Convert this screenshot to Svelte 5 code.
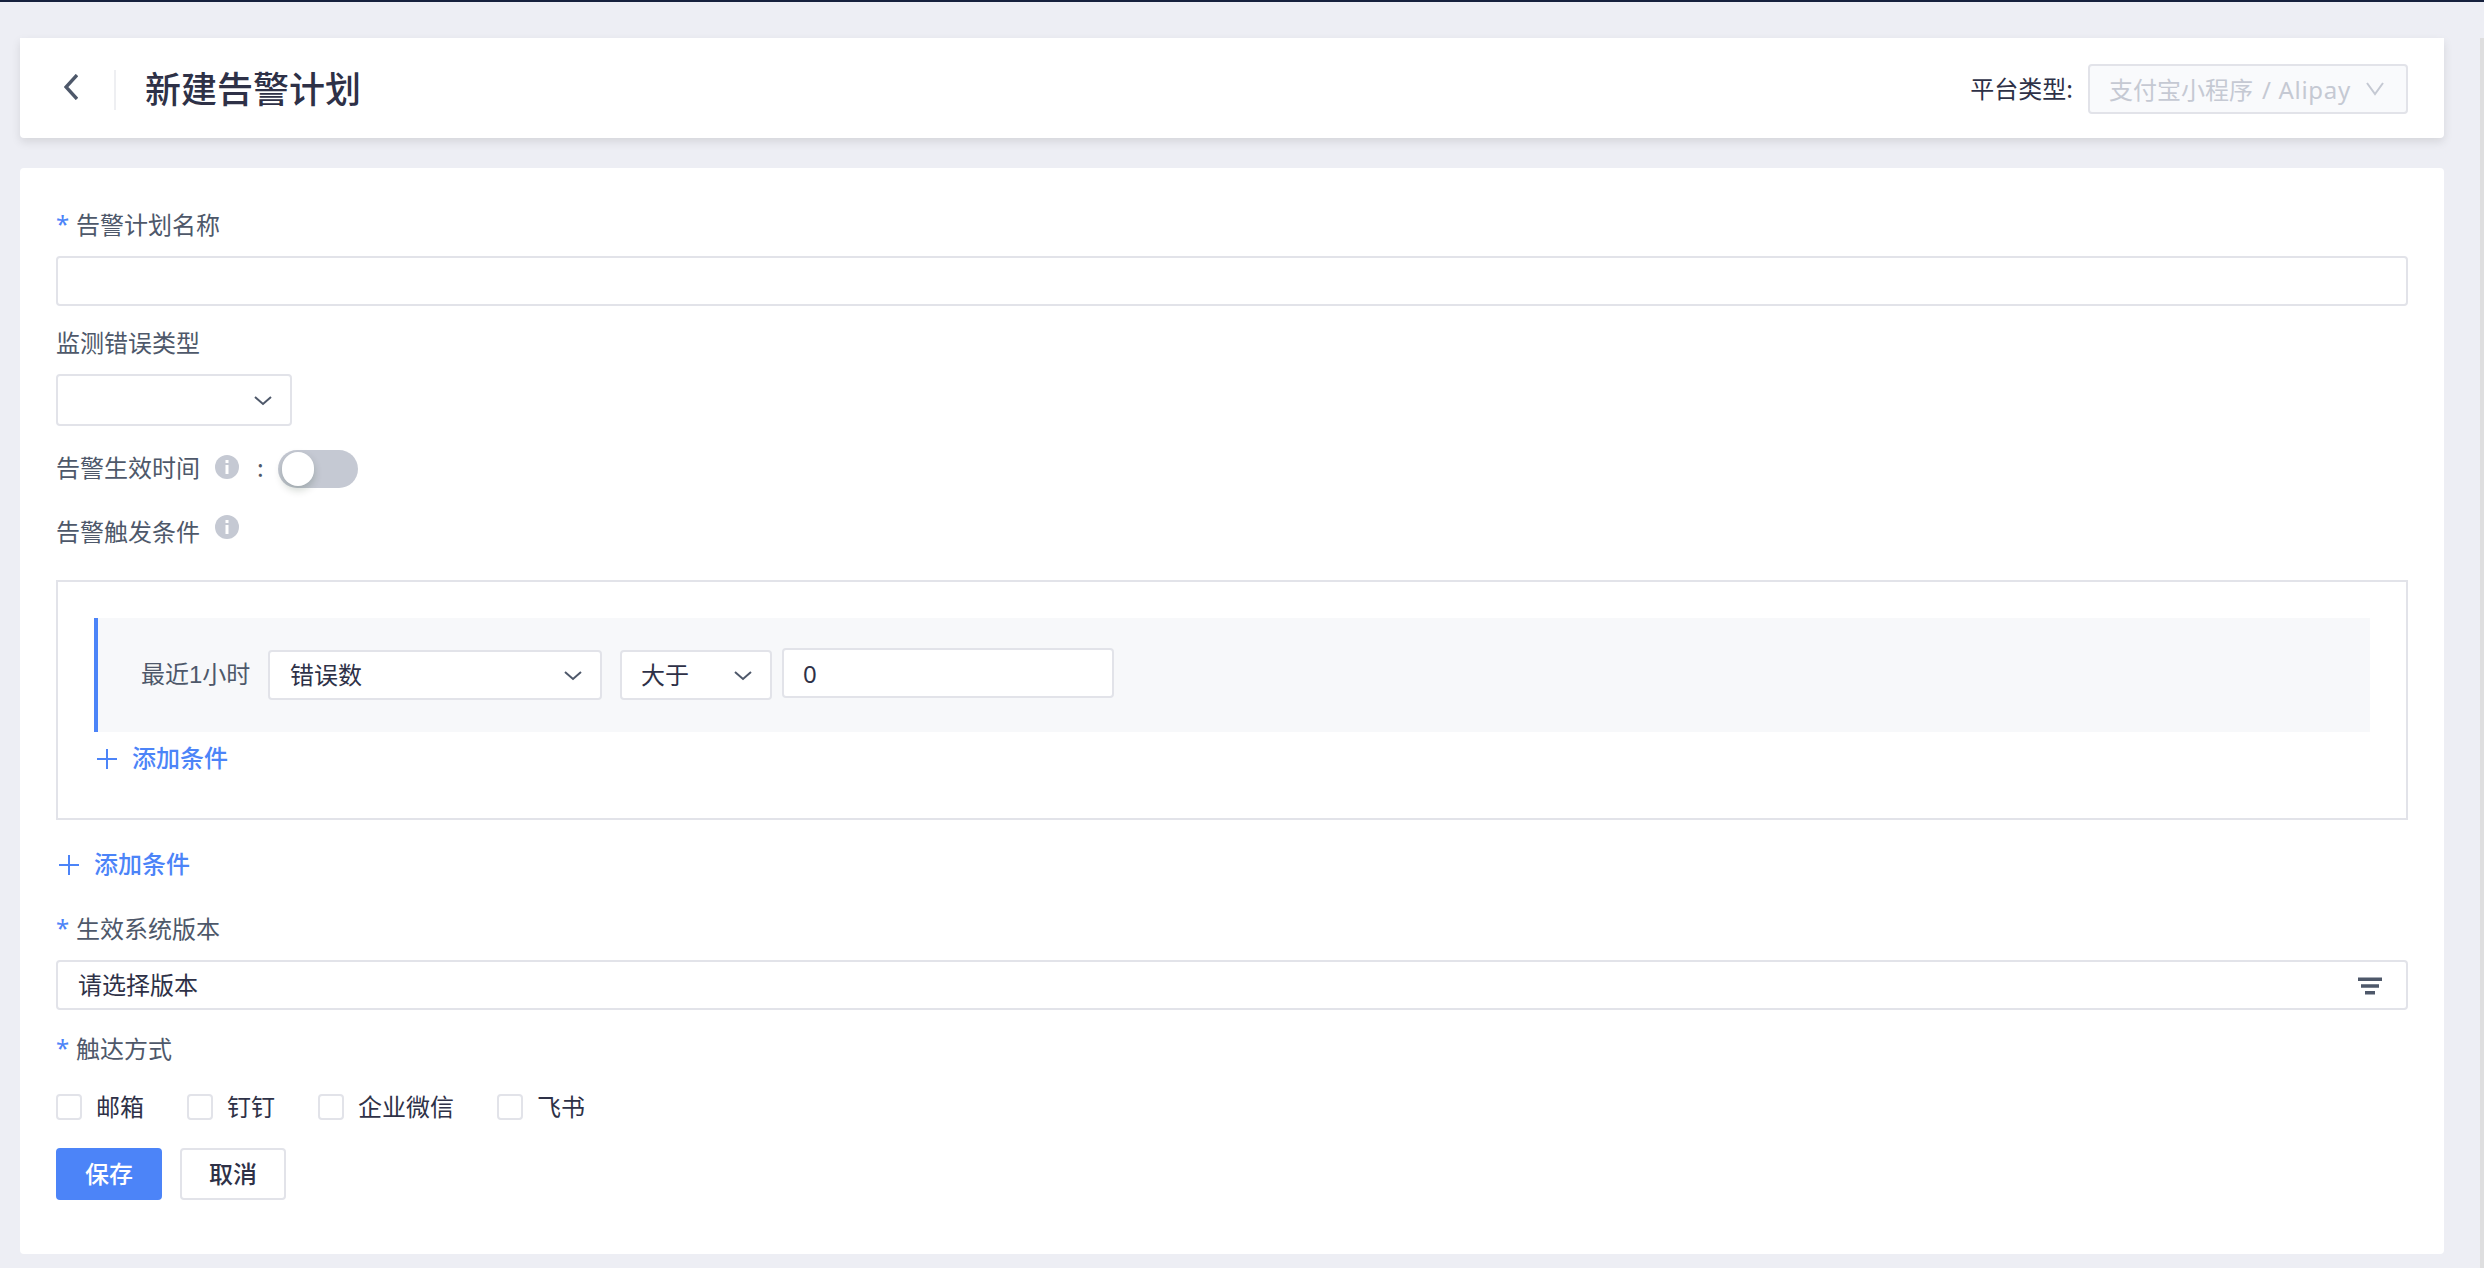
<script>
  let name = "";
  let enabled = false;
  let threshold = "0";

  const channels = [
    { key: "email", label: "邮箱", checked: false },
    { key: "dingtalk", label: "钉钉", checked: false },
    { key: "wecom", label: "企业微信", checked: false },
    { key: "feishu", label: "飞书", checked: false }
  ];
</script>

<style>
  :global(body) {
    background-color: #edeef4;
  }

  .page {
    box-sizing: border-box;
    display: flex;
    justify-content: space-between;
    height: 1268px;
    border-top: 2px solid #16213d;
    padding-top: 36px;
    padding-left: 20px;
    color: #2e3147;
    font-family: "Noto Sans CJK SC", "Noto Sans", sans-serif;
    font-size: 24px;
    line-height: 36px;
    overflow: hidden;
  }

  .page *,
  .page *::before {
    box-sizing: border-box;
  }

  .content {
    width: 2424px;
  }

  .scrollbar {
    width: 4px;
    background-color: #dededf;
  }

  .header {
    display: flex;
    align-items: center;
    height: 100px;
    padding: 0 36px 0 44px;
    background-color: white;
    border-radius: 0 0 4px 4px;
    box-shadow: 0 4px 10px rgba(0, 0, 0, 0.1);
  }

  .back {
    display: block;
    width: 14px;
    height: 26px;
    margin-bottom: 2px;
  }

  .header__divider {
    width: 2px;
    height: 40px;
    margin: 4px 29px 0 36px;
    background-color: #eeeff2;
  }

  .header__title {
    flex: 1;
    margin: 0 0 2px;
    font-size: 36px;
    font-weight: 500;
    line-height: 52px;
  }

  .header__label {
    margin-right: 15px;
  }

  .box {
    display: flex;
    align-items: center;
    justify-content: space-between;
    height: 50px;
    padding: 0 20px;
    background-color: white;
    border: 2px solid #e2e3e9;
    border-radius: 4px;
  }

  .box span {
    margin-bottom: 2px;
  }

  .box svg {
    display: block;
    margin-top: 2px;
  }

  .box--disabled {
    width: 320px;
    margin-top: 2px;
    padding: 0 22px 0 19px;
    background-color: #f9fafc;
    color: #c5c9d3;
  }

  .box--disabled span {
    margin-bottom: 0;
  }

  .box--disabled svg {
    margin-top: 0;
  }

  .box--disabled .latin {
    margin-left: 2px;
    font-family: "Noto Sans", sans-serif;
    letter-spacing: 0.7px;
    white-space: pre;
  }

  .box--type {
    width: 236px;
    height: 52px;
    padding-right: 18px;
    justify-content: flex-end;
  }

  .box--metric {
    width: 334px;
    padding-right: 18px;
    margin-right: 18px;
  }

  .box--operator {
    width: 152px;
    padding: 0 18px 0 19px;
    margin-right: 10px;
  }

  .box--version {
    padding: 0 24px 0 20px;
  }

  input.box {
    display: block;
    width: 100%;
    color: inherit;
    font: inherit;
    outline: none;
  }

  input.box--value {
    width: 332px;
    margin-bottom: 4px;
    font-family: "Noto Sans", sans-serif;
    padding: 0 19px;
  }

  .form {
    height: 1086px;
    margin-top: 30px;
    padding: 38px 36px 0;
    background-color: white;
    border-radius: 4px;
  }

  .label {
    display: flex;
    height: 50px;
    color: #4e586a;
  }

  .label--required::before {
    content: "*";
    width: 20px;
    color: #4c84f8;
    font-family: "Noto Sans", sans-serif;
  }

  .label--type {
    margin-top: 18px;
  }

  .label--time {
    height: 38px;
    margin-top: 24px;
    line-height: 33px;
  }

  .label--trigger {
    height: 74px;
    margin-top: 18px;
    padding-top: 8px;
    line-height: 33px;
  }

  .label--version {
    height: 50px;
  }

  .label--channel {
    height: 64px;
    margin-top: 20px;
  }

  .info {
    display: block;
    width: 24px;
    height: 24px;
    margin-left: 15px;
  }

  .label--time .info {
    margin-top: 5px;
  }

  .label--trigger .info {
    margin-top: 1px;
  }

  .colon {
    width: 39px;
    padding-left: 18px;
  }

  .switch {
    width: 80px;
    height: 38px;
    padding: 2px 4px;
    border: 0;
    border-radius: 19px;
    background-color: #c5c9d3;
  }

  .switch__knob {
    display: block;
    width: 32px;
    height: 34px;
    border-radius: 17px;
    background-color: white;
    box-shadow: 0 4px 8px rgba(0, 35, 11, 0.2);
  }

  .group {
    height: 240px;
    padding: 36px;
    border: 2px solid #e2e3e9;
  }

  .condition {
    display: flex;
    align-items: center;
    height: 114px;
    padding-left: 43px;
    background-color: #f7f8fa;
    border-left: 4px solid #4c84f8;
  }

  .condition__period {
    width: 127px;
    color: #4e586a;
    font-family: "Liberation Sans", "Noto Sans CJK SC", sans-serif;
  }

  .add {
    display: flex;
    align-items: center;
    gap: 15px;
    height: 36px;
    padding: 0 0 0 3px;
    border: 0;
    background: none;
    color: #4c84f8;
    font: inherit;
    font-weight: 500;
  }

  .add span {
    margin-bottom: 4px;
  }

  .group .add {
    margin-top: 9px;
  }

  .add--group {
    margin: 27px 0;
  }

  .channels {
    display: flex;
    height: 54px;
  }

  .channel {
    display: flex;
    height: 26px;
    align-items: center;
    margin-right: 43px;
  }

  .channel span {
    margin-bottom: 3px;
  }

  .channel input {
    appearance: none;
    width: 26px;
    height: 26px;
    margin: 0 14px 0 0;
    border: 2px solid #e2e3e9;
    border-radius: 4px;
    background-color: white;
  }

  .actions {
    display: flex;
    gap: 18px;
  }

  .button {
    width: 106px;
    height: 52px;
    padding: 0 0 3px;
    border: 2px solid #e2e3e9;
    border-radius: 4px;
    background-color: white;
    color: inherit;
    font: inherit;
    font-weight: 500;
  }

  .button--primary {
    border-color: #4c84f8;
    background-color: #4c84f8;
    color: white;
  }
</style>

{#snippet chevron()}
  <svg width="18" height="10" viewBox="0 0 18 10" fill="none">
    <path d="M1 1L9 8L17 1" stroke="#4e586a" stroke-width="2" />
  </svg>
{/snippet}

{#snippet info()}
  <svg class="info" viewBox="0 0 24 24">
    <circle cx="12" cy="12" r="12" fill="#c5c9d3" />
    <path d="M10.5 5H13.5V8H10.5ZM10.5 10H13.5V19H10.5Z" fill="white" />
  </svg>
{/snippet}

{#snippet plus()}
  <svg width="20" height="20" viewBox="0 0 20 20">
    <path d="M10 0V20M0 10H20" stroke="#4c84f8" stroke-width="2" />
  </svg>
{/snippet}

<div class="page">
  <div class="content">
    <header class="header">
      <svg class="back" viewBox="0 0 14 26" fill="none">
        <path d="M13 1L2 13L13 25" stroke="#4e586a" stroke-width="3.4" />
      </svg>
      <div class="header__divider"></div>
      <h1 class="header__title">新建告警计划</h1>
      <span class="header__label">平台类型:</span>
      <div class="box box--disabled">
        <span>支付宝小程序<span class="latin">{" / Alipay"}</span></span>
        <svg width="18" height="14" viewBox="0 0 18 14" fill="none">
          <path d="M1 1L9 12L17 1" stroke="#c5c9d3" stroke-width="2" />
        </svg>
      </div>
    </header>

    <main class="form">
      <div class="label label--required">告警计划名称</div>
      <input class="box" type="text" aria-label="告警计划名称" bind:value={name} />

      <div class="label label--type">监测错误类型</div>
      <div class="box box--type">{@render chevron()}</div>

      <div class="label label--time">
        告警生效时间
        {@render info()}
        <span class="colon">:</span>
        <button
          class="switch"
          role="switch"
          aria-label="告警生效时间"
          aria-checked={enabled}
          on:click={() => (enabled = !enabled)}>
          <span class="switch__knob"></span>
        </button>
      </div>

      <div class="label label--trigger">
        告警触发条件
        {@render info()}
      </div>

      <div class="group">
        <div class="condition">
          <span class="condition__period">最近1小时</span>
          <div class="box box--metric">
            <span>错误数</span>
            {@render chevron()}
          </div>
          <div class="box box--operator">
            <span>大于</span>
            {@render chevron()}
          </div>
          <input class="box box--value" type="text" aria-label="错误数" bind:value={threshold} />
        </div>
        <button class="add">{@render plus()}<span>添加条件</span></button>
      </div>
      <button class="add add--group">{@render plus()}<span>添加条件</span></button>

      <div class="label label--required label--version">生效系统版本</div>
      <div class="box box--version">
        <span>请选择版本</span>
        <svg width="24" height="18" viewBox="0 0 24 18">
          <path d="M0 0.5H24V4H0ZM3 7.2H21V10.8H3ZM7 14H17V17.5H7Z" fill="#4e586a" />
        </svg>
      </div>

      <div class="label label--required label--channel">触达方式</div>
      <div class="channels">
        {#each channels as channel (channel.key)}
          <label class="channel">
            <input type="checkbox" bind:checked={channel.checked} />
            <span>{channel.label}</span>
          </label>
        {/each}
      </div>

      <div class="actions">
        <button class="button button--primary">保存</button>
        <button class="button">取消</button>
      </div>
    </main>
  </div>
  <div class="scrollbar"></div>
</div>
